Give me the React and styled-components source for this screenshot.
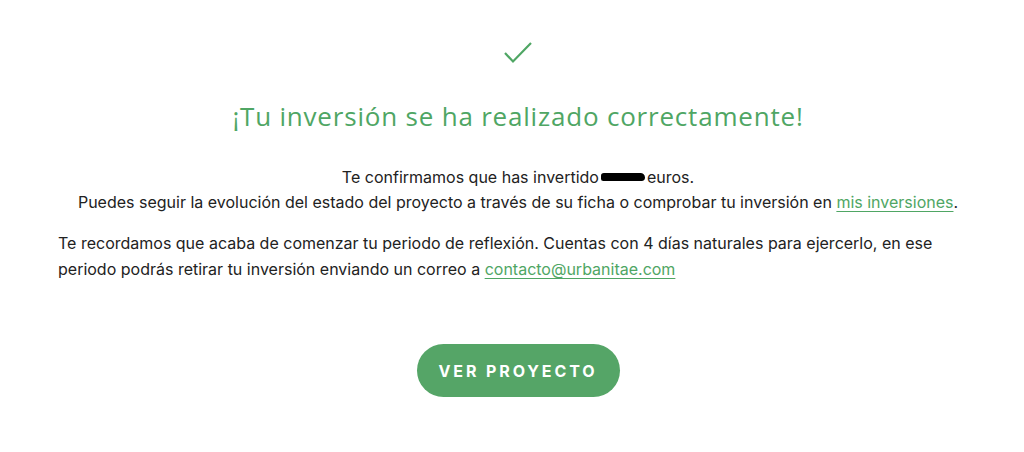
import React from 'react';
import styled, { createGlobalStyle } from 'styled-components';

const GlobalStyle = createGlobalStyle`
  body {
    margin: 0;
    background: #ffffff;
    font-family: Inter, "Noto Sans", sans-serif;
    color: #222222;
  }
`;

const Page = styled.div`
  display: flex;
  justify-content: center;
  padding: 41px 46px 0 58px;
`;

const Content = styled.div`
  width: 920px;
  display: flex;
  flex-direction: column;
  align-items: center;
`;

const Check = styled.svg`
  width: 30px;
  height: 24px;
  display: block;
`;

const Title = styled.h1`
  margin: 34px 0 0;
  font-family: "Open Sans", "Noto Sans", sans-serif;
  font-weight: 400;
  font-size: 26px;
  letter-spacing: 0.8px;
  line-height: 34px;
  color: #4fa664;
`;

const Centered = styled.p`
  margin: 32px 0 0;
  text-align: center;
  font-size: 16px;
  line-height: 25px;
`;

const Reminder = styled.p`
  align-self: stretch;
  margin: 15px 0 0;
  font-size: 16px;
  line-height: 26px;
`;

const GreenLink = styled.a`
  color: #4fa664;
  text-decoration: underline;
  text-underline-offset: 3px;
`;

const Hidden = styled.span`
  display: inline-block;
  width: 44px;
  height: 8px;
  margin: 0 2px 0 2px;
  background: #000;
  border-radius: 5px 8px 6px 4px;
  vertical-align: 2px;
`;

const Button = styled.button`
  margin-top: 62px;
  width: 203px;
  height: 53px;
  border: none;
  border-radius: 27px;
  background: #55a567;
  color: #ffffff;
  font-family: Inter, "Noto Sans", sans-serif;
  font-weight: 700;
  font-size: 16px;
  letter-spacing: 2.9px;
  cursor: pointer;
`;

export default function App() {
  return (
    <>
      <GlobalStyle />
      <Page>
        <Content>
          <Check viewBox="0 0 30 24">
            <polyline points="2,12 10,20.5 28,2" fill="none" stroke="#4fa664" strokeWidth="2.2" />
          </Check>
          <Title>¡Tu inversión se ha realizado correctamente!</Title>
          <Centered>
            Te confirmamos que has invertido<Hidden />euros.
            <br />
            Puedes seguir la evolución del estado del proyecto a través de su ficha o comprobar tu inversión en{' '}
            <GreenLink href="#">mis inversiones</GreenLink>.
          </Centered>
          <Reminder>
            Te recordamos que acaba de comenzar tu periodo de reflexión. Cuentas con 4 días naturales para ejercerlo, en ese
            periodo podrás retirar tu inversión enviando un correo a{' '}
            <GreenLink href="#">contacto@urbanitae.com</GreenLink>
          </Reminder>
          <Button>VER PROYECTO</Button>
        </Content>
      </Page>
    </>
  );
}
